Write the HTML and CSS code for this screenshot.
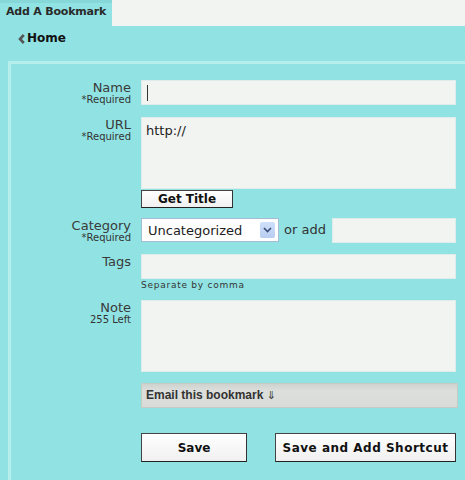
FILE: index.html
```html
<!DOCTYPE html>
<html>
<head>
<meta charset="utf-8">
<link rel="stylesheet" href="styles.css">
</head>
<body>
<div class="topbar">
  <div class="tab">Add A Bookmark</div>
  <div class="tabfill"></div>
</div>
<div class="nav"><svg class="chev" width="7" height="10" viewBox="0 0 7 10"><path d="M5.8 1 L2 5 L5.8 9" fill="none" stroke="#555" stroke-width="2.6"/></svg><span class="home">Home</span></div>
<div class="panel">
  <div class="row r-name">
    <div class="label"><div class="lt">Name</div><div class="req">*Required</div></div>
    <div class="ctl"><div class="field input"><span class="caret"></span></div></div>
  </div>
  <div class="row r-url">
    <div class="label"><div class="lt">URL</div><div class="req">*Required</div></div>
    <div class="ctl">
      <div class="field area url">http://</div>
      <button class="btn gettitle">Get Title</button>
    </div>
  </div>
  <div class="row r-cat">
    <div class="label"><div class="lt">Category</div><div class="req">*Required</div></div>
    <div class="ctl catline">
      <div class="select"><span class="seltext">Uncategorized</span><span class="selarrow"><svg width="9" height="6" viewBox="0 0 9 6"><path d="M1 1 L4.5 4.5 L8 1" fill="none" stroke="#3b4f7a" stroke-width="1.6"/></svg></span></div>
      <span class="oradd">or add</span>
      <div class="field input addcat"></div>
    </div>
  </div>
  <div class="row r-tags">
    <div class="label"><div class="lt">Tags</div></div>
    <div class="ctl">
      <div class="field input"></div>
      <div class="hint">Separate by comma</div>
    </div>
  </div>
  <div class="row r-note">
    <div class="label"><div class="lt">Note</div><div class="req">255 Left</div></div>
    <div class="ctl"><div class="field area note"></div></div>
  </div>
  <div class="row r-email">
    <div class="label"></div>
    <div class="ctl"><div class="emailbar">Email this bookmark <span class="darr">&#8659;</span></div></div>
  </div>
  <div class="row r-save">
    <div class="label"></div>
    <div class="ctl saveline">
      <button class="btn big save">Save</button>
      <button class="btn big shortcut">Save and Add Shortcut</button>
    </div>
  </div>
</div>
</body>
</html>
```

FILE: styles.css
```css
html, body {
  margin: 0;
  padding: 0;
}
body {
  background: #91e3e3;
  font-family: "DejaVu Sans", Verdana, sans-serif;
  color: #333;
  width: 465px;
  height: 480px;
  overflow: hidden;
}
.topbar {
  display: flex;
  height: 26px;
}
.tab {
  width: 106px;
  padding-left: 6px;
  border-top: 3px solid #86d8d8;
  font-size: 11px;
  font-weight: bold;
  color: #2a2a2a;
  line-height: 18px;
  letter-spacing: -0.2px;
}
.tabfill {
  flex: 1;
  background: #f2f4f2;
}
.nav {
  height: 35px;
  padding-left: 18px;
  display: flex;
  align-items: flex-start;
}
.chev {
  margin-top: 8px;
  margin-right: 2px;
}
.home {
  font-size: 12px;
  font-weight: bold;
  color: #111;
  line-height: 24px;
}
.panel {
  margin-left: 8px;
  border-top: 3px solid #b6eeee;
  border-left: 3px solid #b6eeee;
  padding-top: 16px;
  height: 420px;
}
.row {
  display: grid;
  grid-template-columns: 120px 315px;
  column-gap: 10px;
}
.label {
  text-align: right;
}
.lt {
  font-size: 13px;
  line-height: 15px;
  color: #3a3a3a;
}
.req {
  font-size: 10px;
  line-height: 10px;
  color: #333;
}
.field {
  background: #f2f4f2;
  border: 1px solid #dfecec;
  box-sizing: border-box;
  font-size: 13px;
  color: #222;
}
.input {
  height: 25px;
  position: relative;
}
.caret {
  position: absolute;
  left: 5px;
  top: 4px;
  width: 1px;
  height: 16px;
  background: #333;
}
.area {
  padding: 5px 4px;
}
.url {
  height: 72px;
}
.note {
  height: 72px;
}
.r-url { margin-top: 12px; }
.r-cat { margin-top: 10px; }
.r-tags { margin-top: 11px; }
.r-note { margin-top: 9px; }
.r-email { margin-top: 11px; }
.r-save { margin-top: 25px; }
.btn {
  font-family: "DejaVu Sans", Verdana, sans-serif;
  font-weight: bold;
  color: #111;
  background: linear-gradient(#ffffff, #f0f0f0);
  border: 1px solid #444;
  border-right-color: #333;
  border-bottom-color: #222;
  padding: 0;
  margin: 0;
  box-sizing: border-box;
  display: block;
}
.gettitle {
  width: 92px;
  height: 18px;
  margin-top: 1px;
  font-size: 12px;
  line-height: 15px;
}
.catline {
  display: flex;
  align-items: flex-start;
}
.select {
  width: 138px;
  height: 24px;
  box-sizing: border-box;
  background: #fff;
  border: 1px solid #a6bcd4;
  display: flex;
  align-items: center;
  justify-content: space-between;
  padding: 0 3px 0 6px;
}
.seltext {
  font-size: 13px;
  color: #222;
}
.selarrow {
  width: 15px;
  height: 16px;
  background: linear-gradient(#cfe0fa, #b7cdf2);
  border-radius: 2px;
  display: flex;
  align-items: center;
  justify-content: center;
}
.oradd {
  font-size: 13px;
  color: #333;
  margin-left: 5px;
  line-height: 24px;
}
.addcat {
  width: 124px;
  margin-left: 6px;
}
.hint {
  font-size: 9px;
  color: #333;
  letter-spacing: 0.75px;
  line-height: 11px;
  margin-top: 1px;
}
.emailbar {
  width: 317px;
  height: 25px;
  box-sizing: border-box;
  background: linear-gradient(#cfd3cf, #dcdfdb 30%, #d8dbd7);
  border: 1px solid #c4cac4;
  font-family: "Liberation Sans", Arial, sans-serif;
  font-weight: bold;
  font-size: 12px;
  color: #333;
  line-height: 23px;
  padding-left: 4px;
}
.darr {
  font-family: "DejaVu Sans", sans-serif;
  font-weight: normal;
  font-size: 11px;
}
.saveline {
  display: flex;
  gap: 28px;
}
.big {
  height: 29px;
  font-size: 12px;
}
.save {
  width: 106px;
}
.shortcut {
  width: 181px;
  letter-spacing: 0.5px;
}
```
